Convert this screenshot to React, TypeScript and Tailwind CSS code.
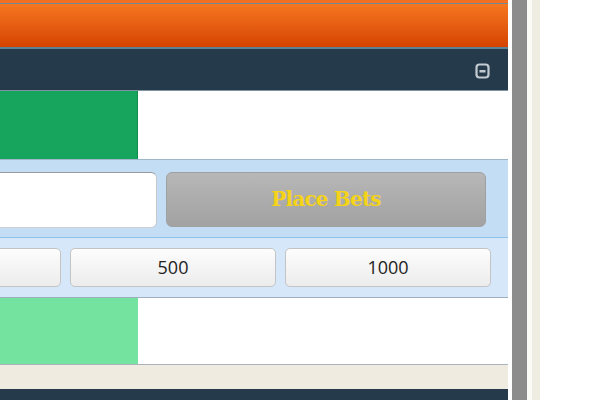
import React from "react";

export default function App() {
  return (
    <div className="flex w-[600px] h-[400px] overflow-hidden bg-white" style={{ fontFamily: '"DejaVu Sans", Verdana, sans-serif' }}>
      <div className="flex flex-col w-[508px] h-[400px] overflow-hidden">
        <div className="h-[3px] bg-[#f37021]" />
        <div className="h-[1px] bg-[#6f8a9a]" />
        <div className="h-[43px] bg-gradient-to-b from-[#f6761f] to-[#d54302]" />
        <div className="h-[2px] bg-[#5f8196]" />
        <div className="h-[41px] bg-[#253a4a] flex items-center justify-end pr-[17px]">
          <svg width="16" height="16" viewBox="0 0 16 16" className="mt-[2px]">
            <rect x="1.5" y="1.5" width="12" height="13" rx="3" fill="none" stroke="#c3cbd2" strokeWidth="2.2" />
            <rect x="4.5" y="7" width="6" height="2.5" fill="#c3cbd2" />
          </svg>
        </div>
        <div className="h-[1px] bg-[#7e94a4]" />
        <div className="h-[68px] flex bg-white">
          <div className="w-[138px] bg-[#17a45d] border-r border-[#138a4e]" />
        </div>
        <div className="h-[1px] bg-[#9fb6c8]" />
        <div className="h-[77px] bg-[#c3def4] flex items-center gap-[9px] pr-[22px] pt-[1px]">
          <div className="flex-1 h-[56px] bg-white rounded-r-[6px] border border-l-0 border-[#9a9a9a] border-b-[#d0d0d0] border-r-[#c8c8c8] ml-[-10px] mt-[1px]" />
          <div className="w-[320px] h-[55px] rounded-[6px] bg-gradient-to-b from-[#b7b7b7] to-[#a2a2a2] border border-[#a0a0a0] flex items-center justify-center">
            <span className="text-[#f5d317] font-bold text-[20px]" style={{ fontFamily: '"DejaVu Serif", "Liberation Serif", serif', letterSpacing: "-0.8px" }}>Place Bets</span>
          </div>
        </div>
        <div className="h-[1px] bg-[#8fc1ea]" />
        <div className="h-[59px] bg-[#d5e7f8] flex items-center justify-end gap-[9px] pr-[17px]">
          {["", "500", "1000"].map((t, i) => (
            <div key={i} className="w-[206px] shrink-0 h-[39px] rounded-[5px] border border-[#c4c4c4] bg-gradient-to-b from-[#fdfdfd] to-[#ececec] flex items-center justify-center text-[18px] text-[#222]" style={{ fontFamily: '"Open Sans", sans-serif' }}>
              {t}
            </div>
          ))}
        </div>
        <div className="h-[1px] bg-[#9cb0c0]" />
        <div className="h-[66px] flex bg-white">
          <div className="w-[138px] bg-[#74e3a0]" />
        </div>
        <div className="h-[1px] bg-[#a9b4bc]" />
        <div className="h-[24px] bg-[#efebe1]" />
        <div className="flex-1 bg-[#253a4a]" />
      </div>
      <div className="w-[4px] bg-white" />
      <div className="w-[15px] bg-[#8c8c8c]" />
      <div className="w-[5px] bg-[#fbfaf6]" />
      <div className="w-[8px] bg-[#efece2]" />
      <div className="flex-1 bg-white" />
    </div>
  );
}
